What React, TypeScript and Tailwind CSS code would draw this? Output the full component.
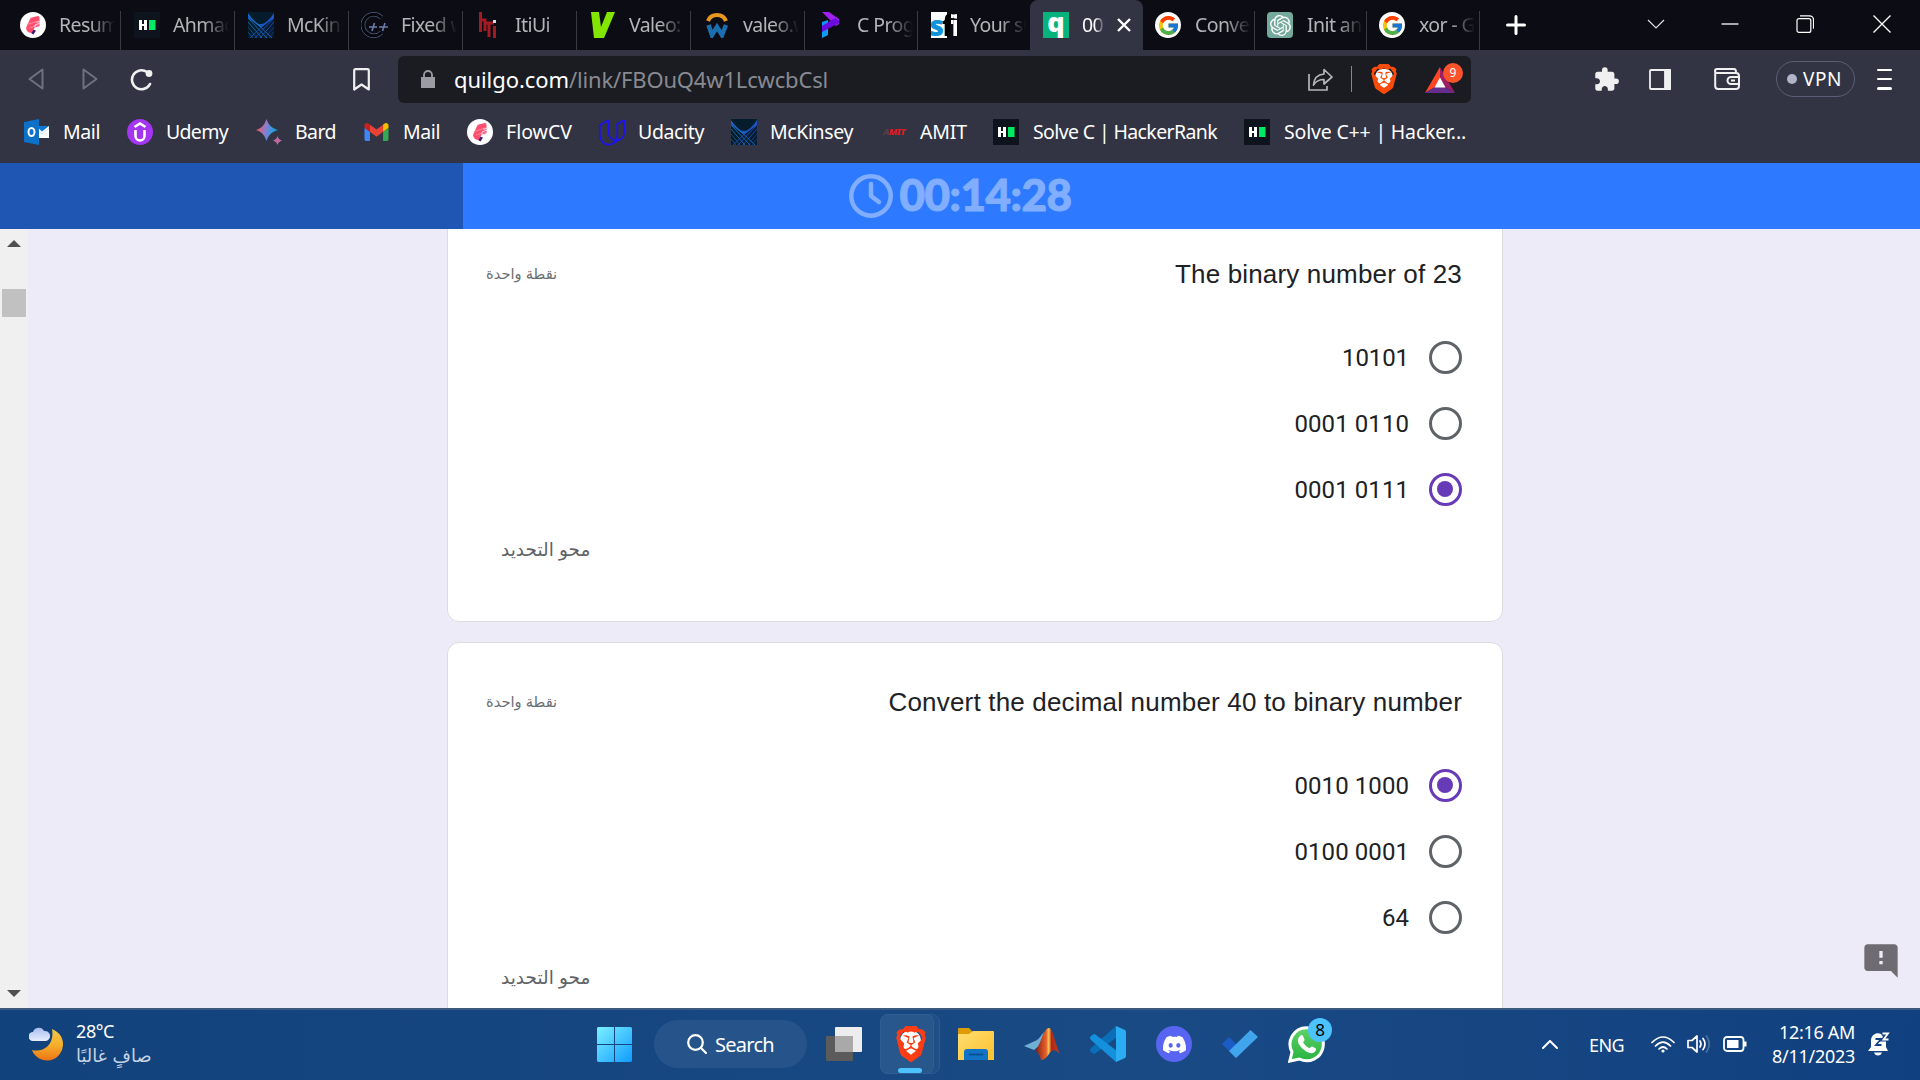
import { useLayoutEffect, useRef, useState } from "react";
import type { ReactNode } from "react";
import { FcGoogle } from "react-icons/fc";
import { SiBrave, SiDiscord, SiOpenai, SiUdacity } from "react-icons/si";
import { MdExtension, MdFeedback } from "react-icons/md";

/* Text whose tracking is adjusted so that it fills exactly `w` pixels. */
function Fit({ w, children, className = "" }: { w: number; children: string; className?: string }) {
  const ref = useRef<HTMLSpanElement>(null);
  const [spacing, setSpacing] = useState(0);
  useLayoutEffect(() => {
    if (ref.current) {
      const natural = ref.current.getBoundingClientRect().width;
      setSpacing((w - natural) / children.length);
    }
  }, [w, children]);
  return (
    <span ref={ref} className={`inline-block shrink-0 whitespace-pre ${className}`} style={{ letterSpacing: spacing }}>
      {children}
    </span>
  );
}

/* ---------- favicons ---------- */

const FlowCv = () => (
  <svg viewBox="0 0 26 26" className="size-[26px]">
    <circle cx="13" cy="13" r="13" fill="#fff" />
    <path d="M11 17l5 1.500-2.500 4L11 21z" fill="#3b1a78" />
    <path d="M6 16l4-9q.5-1.200 1.800-1.500l6-1.500q1.700 0 1.700 1.500V14l-5 2-3 5q-3 0-4.500-2z" fill="#ff4f6d" />
    <path d="M7 12.500L18.500 9M9 16l9-2.500" stroke="#ff86a0" strokeWidth="1" fill="none" />
    <path d="M19.500 9.500l-3 .8M20 14.500V11l-5 2v3z" stroke="#fff" strokeWidth=".8" fill="#ff5d84" />
  </svg>
);

const Hacker = () => (
  <svg viewBox="0 0 26 26" className="size-[26px]">
    <path fill="#0e141e" d="M0 0h26v26H0z" />
    <path d="M5 8h3v4h2V8h3v10h-3v-4H8v4H5z" fill="#fff" />
    <path d="M15 8h6.500v10H15z" fill="#00ea64" />
  </svg>
);

const McKinsey = () => (
  <svg viewBox="0 0 26 26" className="size-[26px]">
    <path fill="#051c2c" d="M0 0h26v26H0z" />
    <path d="M0 1c5 7 8 11 13 11S21 8 26 1v5L14 15h-2L0 6z" fill="#1c62d8" opacity=".85" />
    <g strokeWidth=".8" fill="none">
      <path d="M0 3l24 23M0 6l19 20M0 10l14 16" stroke="#1a7fc4" />
      <path d="M26 3L2 26M26 6L7 26M26 10L12 26" stroke="#2450d8" />
      <path d="M0 15l9 11M0 20l5 6" stroke="#1a7fc4" opacity=".6" />
      <path d="M26 15l-9 11M26 20l-5 6" stroke="#2450d8" opacity=".6" />
    </g>
  </svg>
);

const Cpp = () => (
  <svg viewBox="0 0 28 26" className="h-[26px] w-7" fill="none">
    <path d="M20.500 5.500A10.800 10.800 0 1 0 20.500 20.500" stroke="#4c5a80" strokeWidth="4.600" />
    <path d="M20.500 5.500A10.800 10.800 0 1 0 20.500 20.500" stroke="#05050a" strokeWidth="3" />
    <path d="M8 15h8M13.500 11l-2.500 8M18 15h9M24 11l-2.500 8" stroke="#6b7da6" strokeWidth="1.600" />
  </svg>
);

const Iti = () => (
  <svg viewBox="0 0 26 26" className="size-[26px]" fill="none" stroke="#a31a22" strokeWidth="3">
    <path d="M4.500 0v20M4.500 8H9v11M8 11h10M13 11v14M18.500 14v12" />
    <path d="M18.500 8v3" stroke="#ddd" />
  </svg>
);

const Valeo = () => (
  <svg viewBox="0 0 26 26" className="size-[26px]">
    <path d="M1 0h8l2 15L17 0h8L14 26H4z" fill="#82e600" />
  </svg>
);

const Wuzzuf = () => (
  <svg viewBox="0 0 26 26" className="size-[26px]" fill="none">
    <path d="M4 9C7 1 19 1 22 9" stroke="#e8981f" strokeWidth="4" />
    <path d="M4.500 13l3.500 10 5-8 5 8 4-10" stroke="#1c6fae" strokeWidth="4.500" />
  </svg>
);

const Programiz = () => (
  <svg viewBox="0 0 26 26" className="size-[26px]">
    <path d="M4 10l6-2v15l-6 3z" fill="#0b9bf5" />
    <path d="M4 0h7l10 7v5l-3 2-3-3z" fill="#a020f0" />
    <path d="M21 11L4 20v-6l13-8 4 3z" fill="#6a0be0" />
  </svg>
);

const StreetIcon = () => (
  <span className="flex size-[26px] items-center justify-center overflow-hidden bg-gradient-to-r from-white from-60% to-[#0c0c14] to-60% font-['Open_Sans'] text-[28px] leading-none font-extrabold tracking-[-2px]">
    <span className="text-[#1292d8]">s</span>
    <span className="bg-gradient-to-r from-black from-55% to-white to-55% bg-clip-text text-transparent">fi</span>
  </span>
);

const Quilgo = () => (
  <span className="flex size-[26px] items-center justify-center bg-[#07b37d] pb-2 font-['Open_Sans'] text-[27px] leading-none font-extrabold text-white">
    q
  </span>
);

const Google = () => (
  <span className="flex size-[26px] items-center justify-center rounded-full bg-white">
    <FcGoogle size={23} />
  </span>
);

const ChatGpt = () => (
  <span className="flex size-[26px] items-center justify-center rounded-[4px] bg-[#74aa9c] text-white">
    <SiOpenai size={21} />
  </span>
);

const Outlook = () => (
  <svg viewBox="0 0 26 26" className="size-[26px]">
    <path d="M13 7h12v12H13z" fill="#fff" />
    <path d="M13 7h12v2l-7 6-5-4z" fill="#0f78d4" />
    <path d="M13 8l5 4.500L25 7v2l-7 6-5-4z" fill="#fff" />
    <path d="M0 3l15-3v26L0 23z" fill="#0a70c8" />
    <ellipse cx="7.500" cy="13" rx="3" ry="4" fill="none" stroke="#fff" strokeWidth="2" />
  </svg>
);

const Udemy = () => (
  <svg viewBox="0 0 26 26" className="size-[26px]" fill="none" stroke="#fff" strokeWidth="2.600">
    <circle cx="13" cy="13" r="13" fill="#a435f0" stroke="none" />
    <path d="M7.500 8L13 4.500 18.500 8M8.500 11v6a4.500 4.500 0 0 0 9 0v-6" />
  </svg>
);

const Bard = () => (
  <svg viewBox="0 0 26 26" className="size-[26px]">
    <defs>
      <linearGradient id="bard" x1="0" x2="1" y1=".4" y2=".6">
        <stop offset=".1" stopColor="#e0616c" />
        <stop offset=".4" stopColor="#9479cc" />
        <stop offset=".8" stopColor="#1f9fe0" />
      </linearGradient>
    </defs>
    <path d="M10.500 0c2 6 5 9 11.500 11-6.500 2-9.500 5-11.500 11C8.500 16 6 13 0 11 6 9 8.500 6 10.500 0z" fill="url(#bard)" />
    <path d="M21.500 17c.9 2.600 2 3.600 4.500 4.500-2.500.9-3.600 2-4.500 4.500-.9-2.500-2-3.600-4.500-4.500 2.500-.9 3.600-1.900 4.500-4.500z" fill="#c268a0" />
  </svg>
);

const Gmail = () => (
  <svg viewBox="52 42 88 66" className="mr-px h-[18px] w-[25px]">
    <path fill="#4285f4" d="M58 108h14V74L52 59v43c0 3.320 2.690 6 6 6" />
    <path fill="#34a853" d="M120 108h14c3.320 0 6-2.690 6-6V59l-20 15" />
    <path fill="#fbbc04" d="M120 48v26l20-15v-8c0-7.420-8.470-11.650-14.400-7.200" />
    <path fill="#ea4335" d="M72 74V48l24 18 24-18v26L96 92" />
    <path fill="#c5221f" d="M52 51v8l20 15V48l-5.600-4.200c-5.940-4.450-14.400-.22-14.400 7.200" />
  </svg>
);

/* ---------- browser chrome ---------- */

type Tab = { icon: ReactNode; title: string; width: string; active?: boolean };

const tabs: Tab[] = [
  { icon: <FlowCv />, title: "Resume", width: "w-[114px]" },
  { icon: <Hacker />, title: "Ahmad", width: "w-[114px]" },
  { icon: <McKinsey />, title: "McKinsey", width: "w-[114px]" },
  { icon: <Cpp />, title: "Fixed w", width: "w-[114px]" },
  { icon: <Iti />, title: "ItiUi", width: "w-[114px]" },
  { icon: <Valeo />, title: "Valeo: C", width: "w-[114px]" },
  { icon: <Wuzzuf />, title: "valeo.w", width: "w-[114px]" },
  { icon: <Programiz />, title: "C Progr", width: "w-[113px]" },
  { icon: <StreetIcon />, title: "Your su", width: "w-[112px]" },
  { icon: <Quilgo />, title: "00:", width: "w-[113px]", active: true },
  { icon: <Google />, title: "Convert", width: "w-[112px]" },
  { icon: <ChatGpt />, title: "Init and", width: "w-[112px]" },
  { icon: <Google />, title: "xor - Go", width: "w-[113px]" },
];

function TabStrip() {
  return (
    <div className="flex h-[50px] bg-[#0c0c14] pl-[7px]">
      {tabs.map((t, i) => (
        <div
          key={i}
          className={`flex h-[50px] shrink-0 items-center pl-3 ${t.width} ${t.active ? "rounded-t-lg bg-[#323443] text-white" : "text-[#b4b4b8]"}`}
        >
          <span className={`flex w-7 shrink-0 ${i > 9 ? "justify-start" : "justify-center"}`}>{t.icon}</span>
          <span
            className={`ml-3 overflow-hidden text-[19.500px] leading-7 tracking-[-0.600px] whitespace-nowrap [mask-image:linear-gradient(to_right,black_55%,transparent)] ${t.active ? "w-[23px]" : "w-[56px]"}`}
          >
            {t.title}
          </span>
          {t.active ? (
            <svg viewBox="0 0 14 14" className="ml-3 size-3.5" stroke="#fff" strokeWidth="2.400">
              <path d="M1 1l12 12M13 1L1 13" />
            </svg>
          ) : (
            <span className={`ml-auto h-[39px] self-end ${i === 8 ? "w-0" : "w-px bg-[#3a3a40]"}`} />
          )}
        </div>
      ))}
      <svg viewBox="0 0 20 20" className="mt-[15px] ml-[26px] size-5" stroke="#fff" strokeWidth="3" strokeLinecap="round">
        <path d="M10 1.500v17M1.500 10h17" />
      </svg>
      <div className="ml-auto flex h-[47px] items-center pr-[29px]">
        <svg viewBox="0 0 18 18" className="mr-[56px] size-[18px]" fill="none" stroke="#ddd" strokeWidth="1.200">
          <path d="M1 5l8 8 8-8" />
        </svg>
        <svg viewBox="0 0 18 18" className="mr-[57px] size-[18px]" stroke="#fff" strokeWidth="1.300">
          <path d="M.5 9h17" />
        </svg>
        <svg viewBox="0 0 18 18" className="mr-[59px] size-[18px]" fill="none" stroke="#fff" strokeWidth="1.200">
          <rect x="1" y="3.600" width="13.800" height="13.800" rx="2" />
          <path d="M4 .8h9.500a4 4 0 0 1 4 4v9" />
        </svg>
        <svg viewBox="0 0 18 18" className="size-[18px]" stroke="#fff" strokeWidth="1.300">
          <path d="M.5.5l17 17M17.500.5l-17 17" />
        </svg>
      </div>
    </div>
  );
}

function BraveLion({ w, h, color }: { w: number; h: number; color: string }) {
  return (
    <span className="relative flex items-center justify-center">
      <span className="absolute h-[70%] w-[70%] rounded-[40%] bg-white" />
      <SiBrave className={`relative ${color}`} style={{ width: w, height: h }} preserveAspectRatio="none" viewBox="1.600 0 20.800 24" />
    </span>
  );
}

function Toolbar() {
  return (
    <div className="flex h-[58px] items-center bg-[#323443] pl-[28px]">
      <svg viewBox="0 0 16 22" className="h-[22px] w-4" fill="none" stroke="#6f717c" strokeWidth="2" strokeLinejoin="round">
        <path d="M14.500 1.500v19L1.500 11z" />
      </svg>
      <svg viewBox="0 0 16 22" className="ml-[38px] h-[22px] w-4" fill="none" stroke="#6f717c" strokeWidth="2" strokeLinejoin="round">
        <path d="M1.500 1.500v19l13-9.500z" />
      </svg>
      <svg viewBox="0 0 23 23" className="ml-[32px] size-[23px]" fill="none" stroke="#f0f0f0" strokeWidth="2.600">
        <path d="M17 4A9.500 9.500 0 1 0 20 16" strokeLinecap="round" />
        <circle cx="19" cy="5.500" r="3.400" fill="#f0f0f0" stroke="none" />
      </svg>
      <svg viewBox="0 0 17 23" className="ml-[200px] h-[23px] w-[17px]" fill="none" stroke="#f0f0f0" strokeWidth="2.200" strokeLinejoin="round">
        <path d="M1.200 2.500q0-1.300 1.300-1.300h12q1.300 0 1.300 1.300v19L8.500 16.500l-7.300 5z" />
      </svg>
      <div className="ml-7 flex h-[47px] w-[1073px] shrink-0 items-center rounded-md bg-[#1a1c22] pl-[23px]">
        <svg viewBox="0 0 14 18" className="h-[18px] w-3.5">
          <path d="M0 7h14v11H0z" fill="#9a9ba3" />
          <path d="M3 8V5a4 4 0 0 1 8 0v3" fill="none" stroke="#9a9ba3" strokeWidth="1.800" />
        </svg>
        <div className="ml-[19px] flex pb-px text-[22px] leading-8">
          <Fit w={115} className="text-white">quilgo.com</Fit>
          <Fit w={259} className="text-[#888a91]">/link/FBOuQ4w1LcwcbCsl</Fit>
        </div>
        <div className="ml-auto flex items-center pr-[8px]">
          <svg viewBox="0 0 25 23" className="h-[23px] w-[25px]" fill="none" stroke="#b4b5b9" strokeWidth="1.700" strokeLinejoin="round">
            <path d="M1 6v16h18v-4" />
            <path d="M16 1.500l8 7.500-8 7v-4.500C11 11.500 8 13 5.500 17 6 10 10 6.500 16 6z" />
          </svg>
          <span className="ml-[18px] h-[26px] w-px bg-[#85868c]" />
          <span className="ml-[19px]"><BraveLion w={26} h={30} color="text-[#fb4b08]" /></span>
          <span className="relative ml-7 h-[30px] w-[38px]">
            <svg viewBox="0 0 30 26" className="mt-[3px] h-[26px] w-[30px]">
              <path d="M15 0L0 26l10-6 5-8z" fill="#ff4724" />
              <path d="M15 0l15 26-10-6-5-8z" fill="#9e1f63" />
              <path d="M0 26h30l-10-6H10z" fill="#662d91" />
              <path d="M15 10.500L9.500 20.500h11z" fill="#fff" />
            </svg>
            <span className="absolute -top-px right-0 flex size-5 items-center justify-center rounded-full bg-[#fb542b] text-[12px] leading-none text-white">9</span>
          </span>
        </div>
      </div>
      <div className="flex flex-1 items-center">
        <MdExtension className="ml-[122px] size-[27px] text-[#f0f0f0]" />
        <svg viewBox="0 0 22 21" className="ml-[29px] h-[21px] w-[22px]" fill="none" stroke="#f0f0f0" strokeWidth="1.800">
          <rect x="1" y="1" width="20" height="19" rx="1" />
          <path d="M16 1h5v19h-5z" fill="#f0f0f0" />
        </svg>
        <svg viewBox="0 0 26 22" className="ml-[43px] h-[22px] w-[26px]" fill="none" stroke="#f0f0f0" strokeWidth="2">
          <path d="M1.200 4v14a3 3 0 0 0 3 3H22a3 3 0 0 0 3-3V8a3 3 0 0 0-3-3H3a2 2 0 0 1 0-4h17q2 0 2 3" />
          <path d="M25 9h-8a3.500 3.500 0 0 0 0 7h8M17 12.500h4" />
        </svg>
        <div className="ml-[36px] flex h-9 w-[79px] items-center rounded-full border-[1.500px] border-[#5c5e75] pl-2.5">
          <span className="size-2.5 rounded-full bg-[#b2b3c8]" />
          <span className="ml-1.5 text-[19px] text-white"><Fit w={39}>VPN</Fit></span>
        </div>
        <div className="ml-[22px] flex h-[21px] w-[15px] flex-col justify-between">
          <span className="h-[2.500px] rounded bg-white" />
          <span className="h-[2.500px] rounded bg-white" />
          <span className="h-[2.500px] rounded bg-white" />
        </div>
      </div>
    </div>
  );
}

const bookmarks: { icon: ReactNode; label: string; w: number; cell: string }[] = [
  { icon: <Outlook />, label: "Mail", w: 37, cell: "w-[103px]" },
  { icon: <Udemy />, label: "Udemy", w: 62, cell: "w-[129px]" },
  { icon: <Bard />, label: "Bard", w: 41, cell: "w-[108px]" },
  { icon: <Gmail />, label: "Mail", w: 37, cell: "w-[103px]" },
  { icon: <FlowCv />, label: "FlowCV", w: 66, cell: "w-[132px]" },
  { icon: <SiUdacity className="size-[27px] text-[#1c12f5]" />, label: "Udacity", w: 66, cell: "w-[132px]" },
  { icon: <McKinsey />, label: "McKinsey", w: 83, cell: "w-[150px]" },
  {
    icon: (
      <span className="text-[9.500px] font-extrabold tracking-[-0.500px] text-[#e01b22] italic">
        <span className="text-[#5c4046]">A</span>MIT
      </span>
    ),
    label: "AMIT",
    w: 47,
    cell: "w-[112px]",
  },
  { icon: <Hacker />, label: "Solve C | HackerRank", w: 184, cell: "w-[251px]" },
  { icon: <Hacker />, label: "Solve C++ | Hacker...", w: 182, cell: "w-[240px]" },
];

function BookmarksBar() {
  return (
    <div className="flex h-[55px] bg-[#323443] pt-[10px] pl-6">
      {bookmarks.map((b, i) => (
        <div key={i} className={`flex h-[28px] shrink-0 items-center ${b.cell}`}>
          <span className="flex w-[26px] shrink-0 items-center justify-center">{b.icon}</span>
          <span className={`text-[19.500px] leading-7 text-white ${i > 7 ? "ml-3.5" : "ml-[13px]"}`}><Fit w={b.w}>{b.label}</Fit></span>
        </div>
      ))}
    </div>
  );
}

/* ---------- page ---------- */

function TimerBar() {
  return (
    <div className="flex h-[66px] bg-gradient-to-r from-[#1f55b3] from-[463px] to-[#2d79ff] to-[463px]">
      <div className="flex w-full items-center justify-center text-[#81aefe]">
        <svg viewBox="0 0 44 44" className="size-11" fill="none" stroke="currentColor" strokeLinecap="round" strokeLinejoin="round">
          <circle cx="22" cy="22" r="19.700" strokeWidth="4.500" />
          <path d="M22 10v12l8 6" strokeWidth="4.500" />
        </svg>
        <div className="ml-[7px] pb-1 font-['Lato'] text-[44px] leading-none font-black [-webkit-text-stroke:1px_#81aefe]">
          <Fit w={172}>00:14:28</Fit>
        </div>
      </div>
    </div>
  );
}

type Question = { title: string; w: number; options: { label: string; w: number }[]; chosen: number };

function QuestionCard({ q }: { q: Question }) {
  return (
    <section className="h-[408px] w-[1056px] shrink-0 rounded-xl border border-[#dadce0] bg-white px-10 pt-[39px]">
      <header className="flex h-10 items-center justify-between">
        <span dir="rtl" className="ml-[-2px] pt-px font-['Liberation_Sans','DejaVu_Sans'] text-[14.700px] text-[#6b6e72]">نقطة واحدة</span>
        <h2 className="font-['Liberation_Sans'] text-[26px] text-[#202124]"><Fit w={q.w}>{q.title}</Fit></h2>
      </header>
      <ul className="mt-[30px]">
        {q.options.map((o, i) => (
          <li key={i} className="flex h-[66px] items-center justify-end">
            <span className="pt-px font-['Roboto'] text-[24px] text-[#202124]"><Fit w={o.w}>{o.label}</Fit></span>
            <span
              className={`ml-[20px] flex size-[33px] items-center justify-center rounded-full border-3 ${i === q.chosen ? "border-[#673ab7]" : "border-[#5f6368]"}`}
            >
              {i === q.chosen && <span className="mr-px mb-px size-4 rounded-full bg-[#673ab7]" />}
            </span>
          </li>
        ))}
      </ul>
      <div dir="rtl" className="mt-3 pl-[13px] text-left font-['Liberation_Sans','DejaVu_Sans'] text-[18.500px] leading-8 text-[#5f6368]">محو التحديد</div>
    </section>
  );
}

const questions: Question[] = [
  {
    title: "The binary number of 23",
    w: 287,
    options: [
      { label: "10101", w: 67 },
      { label: "0001 0110", w: 114.5 },
      { label: "0001 0111", w: 114.5 },
    ],
    chosen: 2,
  },
  {
    title: "Convert the decimal number 40 to binary number",
    w: 573.5,
    options: [
      { label: "0010 1000", w: 114.5 },
      { label: "0100 0001", w: 114.5 },
      { label: "64", w: 27 },
    ],
    chosen: 0,
  },
];

function Page() {
  return (
    <main className="relative flex h-[779px] overflow-hidden bg-[#eeebf8]">
      <div className="flex h-full w-7 shrink-0 flex-col items-center bg-[#f0f0f0]">
        <svg viewBox="0 0 14 7" className="mt-[11px] h-[7px] w-3.5"><path d="M0 7l7-7 7 7z" fill="#505050" /></svg>
        <span className="mt-[42px] h-7 w-6 bg-[#c1c1c1]" />
        <svg viewBox="0 0 14 7" className="mt-auto mb-[11px] h-[7px] w-3.5"><path d="M0 0l7 7 7-7z" fill="#505050" /></svg>
      </div>
      <div className="-mt-[15px] ml-[419px] flex flex-col gap-5">
        {questions.map((q) => <QuestionCard key={q.title} q={q} />)}
      </div>
      <MdFeedback className="absolute top-[712px] right-[19px] size-[40px] -scale-x-100 text-[#6f6b73]" />
    </main>
  );
}

/* ---------- taskbar ---------- */

const Weather = () => (
  <svg viewBox="0 0 34 34" className="size-[34px]">
    <defs>
      <linearGradient id="moon" x2="0" y2="1"><stop stopColor="#f3c64a" /><stop offset=".5" stopColor="#f5b02c" /><stop offset="1" stopColor="#ee7414" /></linearGradient>
      <linearGradient id="cloud" x2="0" y2="1"><stop stopColor="#a8bdf0" /><stop offset="1" stopColor="#e6edfc" /></linearGradient>
    </defs>
    <path d="M23 2c7 3 11 8 11 15a16 16 0 0 1-31 6c11 3 23-5 20-21z" fill="url(#moon)" />
    <path d="M4 14a4.500 4.500 0 0 1 0-9 6 6 0 0 1 11-1 5 5 0 0 1 2 10z" fill="url(#cloud)" />
  </svg>
);

const WindowsLogo = () => (
  <svg viewBox="0 0 35 35" className="size-[35px]">
    <defs><linearGradient id="win" gradientUnits="userSpaceOnUse" x1="0" y1="0" x2="35" y2="35"><stop stopColor="#7cf0ff" /><stop offset="1" stopColor="#0f9bff" /></linearGradient></defs>
    <path d="M1 0h16v17H0V1zM18 0h16l1 1v16H18zM0 18h17v17H1l-1-1zM18 18h17v16l-1 1H18z" fill="url(#win)" />
  </svg>
);

const TaskView = () => (
  <svg viewBox="0 0 36 34" className="h-[34px] w-9">
    <rect y="9" width="27" height="25" rx="1" fill="#5b5b5b" />
    <rect x="9" width="27" height="25" rx="1" fill="#ededed" />
    <path d="M9 9h18v16H9z" fill="#a9a9a9" />
  </svg>
);

const Folder = () => (
  <svg viewBox="0 0 36 34" className="h-[34px] w-9">
    <defs><linearGradient id="fold" x2="1" y2="1"><stop stopColor="#ffdd72" /><stop offset="1" stopColor="#fcc12c" /></linearGradient></defs>
    <path d="M0 2q0-1 1-1h10l4 4v5H0z" fill="#dd9b05" />
    <path d="M0 7h11l4-3h20q1 0 1 1v28H0z" fill="url(#fold)" />
    <path d="M6 33V25q0-3 3-3h18q3 0 3 3v8z" fill="#1173c6" />
    <path d="M11 27.500h14" stroke="#084d8c" strokeWidth="1.800" />
  </svg>
);

const Matlab = () => (
  <svg viewBox="0 0 36 34" className="h-[34px] w-9">
    <defs><linearGradient id="mat"><stop stopColor="#7c1a14" /><stop offset=".45" stopColor="#e9622a" /><stop offset=".55" stopColor="#ffc35a" /><stop offset=".66" stopColor="#b02a17" /><stop offset="1" stopColor="#c23a1c" /></linearGradient></defs>
    <path d="M0 19l11-5c4-1 6-6 9-9l-4 13-6 5z" fill="#6fb1d6" />
    <path d="M11 23c5-2 8-22 14-22 4 0 6 16 11 26-5-5-8-5-11 0-3 4-5 6-8 6-1-4-3-8-6-10z" fill="url(#mat)" />
  </svg>
);

const VsCode = () => (
  <svg viewBox="0 0 36 36" className="size-9">
    <path d="M26 0L1 22q-2 2 0 4l2 1.500q1.200.8 2.400 0L27 11z" fill="#0a6fb8" />
    <path d="M26 36L1 14q-2-2 0-4l2-1.500q1.200-.8 2.400 0L27 25z" fill="#1590dc" />
    <path d="M26 0l9 4q1 .6 1 2v24q0 1.400-1 2l-9 4z" fill="#2badf3" />
  </svg>
);

const Todo = () => (
  <svg viewBox="0 0 36 30" className="h-[30px] w-9">
    <path d="M0 15l7-7 14 14-7 7z" fill="#1b5cc4" />
    <path d="M7 22L28.500 1 36 8 14 29z" fill="#41a5ee" />
  </svg>
);

const Bell = () => (
  <svg viewBox="0 0 22 24" className="h-6 w-[22px]">
    <path d="M3 15V8a7 7 0 0 1 10-6l5 7v6l2 4H0z" fill="#fff" />
    <path d="M6 20.500h8q-1 3-4 3t-4-3z" fill="#fff" />
    <path d="M7.500 7h5.500l-5 6h5.500" fill="none" stroke="#124180" strokeWidth="1.800" />
    <path d="M14.500 1.500H20l-4.500 6h5" fill="none" stroke="#124180" strokeWidth="4" />
    <path d="M14.500 1.500H20l-4.500 6h5" fill="none" stroke="#fff" strokeWidth="1.800" />
  </svg>
);

function Taskbar() {
  return (
    <footer className="flex h-[72px] items-center border-t-2 border-[#3b5a80] bg-gradient-to-r from-[#12427c] via-[#1a4a84] via-60% to-[#114080] pb-0.5 text-white">
      <div className="flex w-[597px] shrink-0 items-center pl-[29px]">
        <Weather />
        <div className="ml-[13px] flex flex-col pt-0.5">
          <span className="h-[25px] text-[18px] leading-6"><Fit w={38}>28°C</Fit></span>
          <span dir="rtl" className="h-[27px] font-['DejaVu_Sans'] text-[17.800px] leading-6 text-[#c6d3e4]">صافٍ غالبًا</span>
        </div>
      </div>
      <WindowsLogo />
      <div className="ml-[22px] flex h-12 w-[153px] shrink-0 items-center rounded-full bg-[#26548a] pl-[33px]">
        <svg viewBox="0 0 20 20" className="size-5" fill="none" stroke="#fff" strokeWidth="2.200" strokeLinecap="round">
          <circle cx="8.500" cy="8.500" r="7.300" />
          <path d="M14 14l5 5" />
        </svg>
        <span className="ml-2 pt-0.5 text-[20px]"><Fit w={59}>Search</Fit></span>
      </div>
      <span className="ml-[19px]"><TaskView /></span>
      <div className="ml-[18px] flex h-[60px] w-[60px] shrink-0 rounded-lg border border-[#2a5a90] bg-[#1f4f87]">
        <div className="relative -m-px flex w-[54px] items-center justify-center rounded-lg border border-[#34609a]/60 bg-[#28578c] pl-[7px]">
          <BraveLion w={30} h={36} color="text-[#ff3d14]" />
          <span className="absolute bottom-0 left-[17px] h-[5px] w-6 rounded-full bg-[#4cc2ff]" />
        </div>
      </div>
      <div className="ml-[18px] flex items-center gap-[30px]">
        <Folder />
        <Matlab />
        <VsCode />
        <span className="flex size-9 items-center justify-center rounded-full bg-[#5865f2]"><SiDiscord size={23} /></span>
        <Todo />
        <span className="relative flex size-[37px] items-center justify-center">
          <svg viewBox="0 0 37 37" className="size-[37px]">
            <defs><linearGradient id="wa" x2="0" y2="1"><stop stopColor="#5fd268" /><stop offset="1" stopColor="#28b33f" /></linearGradient></defs>
            <path d="M18.500 1.700a16.500 16.500 0 1 1-7 31.300L1.800 35 4 26A16.500 16.500 0 0 1 18.500 1.700z" fill="url(#wa)" stroke="#fff" strokeWidth="3" />
            <path d="M12 10q2-2 3 0l1.500 3.500q.3 1-1.500 2.700 2.300 4.200 6.500 6 1.800-2.200 2.800-1.700l3.300 1.700q1.500 1-1 3.800-3 2.500-8-.3-5-2.700-8-8-2-4.700 1.400-7.700z" fill="#fff" />
          </svg>
          <span className="absolute -top-[8px] -right-[7px] flex size-6 items-center justify-center rounded-full bg-[#4cc2ff] text-[17px] leading-none text-black">8</span>
        </span>
      </div>
      <div className="ml-auto flex items-center pr-[30px]">
        <svg viewBox="0 0 16 9" className="h-[9px] w-4" fill="none" stroke="#fff" strokeWidth="2" strokeLinecap="round"><path d="M1 8l7-7 7 7" /></svg>
        <span className="ml-[31px] pt-0.5 text-[18px]"><Fit w={35}>ENG</Fit></span>
        <svg viewBox="0 0 24 17" className="ml-[27px] h-[17px] w-6" fill="none" stroke="#fff" strokeWidth="1.700" strokeLinecap="round">
          <path d="M1 6.500q11-11 22 0M4.500 10q7.500-7.500 15 0M8 13q4-4 8 0" />
          <circle cx="12" cy="15" r="1.600" fill="#fff" stroke="none" />
        </svg>
        <svg viewBox="0 0 24 20" className="ml-3 h-5 w-6" fill="none" stroke="#fff" strokeWidth="1.700" strokeLinejoin="round" strokeLinecap="round">
          <path d="M1 6.500h4L10 2v16l-5-4.500H1z" />
          <path d="M13 7q2 3 0 6M16 4.500q4 5.500 0 11" />
          <path d="M19.500 2q5.500 8 0 16" stroke="#4c719f" />
        </svg>
        <svg viewBox="0 0 24 16" className="ml-3 h-4 w-6" fill="none" stroke="#fff" strokeWidth="1.800">
          <rect x="1" y="1" width="19.500" height="14" rx="3" />
          <rect x="4" y="4" width="11.500" height="8" fill="#fff" stroke="none" />
          <path d="M22 5.500v5" strokeWidth="3" />
        </svg>
        <div className="ml-[25px] flex w-[83px] flex-col items-end text-[18px] leading-6">
          <Fit w={76}>12:16 AM</Fit>
          <Fit w={83}>8/11/2023</Fit>
        </div>
        <span className="ml-[13px]"><Bell /></span>
      </div>
    </footer>
  );
}

export default function App() {
  return (
    <div className="flex h-[1080px] w-[1920px] flex-col overflow-hidden font-['Noto_Sans','Open_Sans',sans-serif]">
      <TabStrip />
      <Toolbar />
      <BookmarksBar />
      <TimerBar />
      <Page />
      <Taskbar />
    </div>
  );
}
